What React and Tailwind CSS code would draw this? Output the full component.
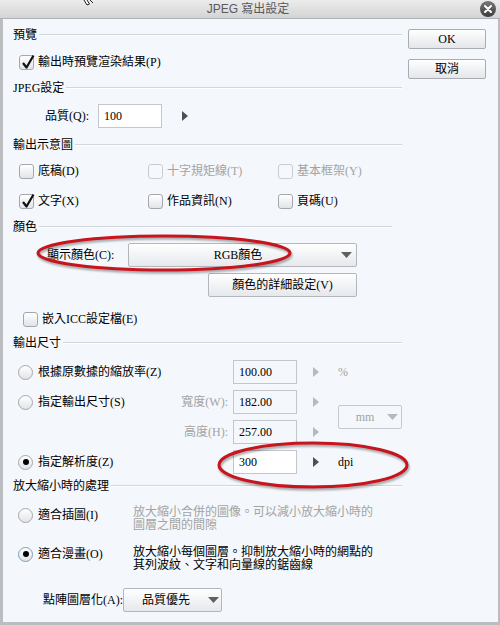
import React from "react";

function Header({ children, extra = "" }) {
  return (
    <div className={`flex h-[14px] items-center pl-[10px] ${extra}`}>
      <span className="whitespace-nowrap leading-[14px]">{children}</span>
      <div className="ml-[2px] h-[2px] flex-1 border-t border-b border-t-[#d3d6db] border-b-white" />
    </div>
  );
}

function Box({ checked, disabled }) {
  return (
    <span
      className={`relative inline-block h-[15px] w-[15px] shrink-0 rounded-[3px] border ${
        disabled
          ? "border-[#c9ccd1] bg-[#f6f8fb]"
          : "border-[#a4a8ae] bg-linear-to-b from-white to-[#e2e4e8]"
      }`}
    >
      {checked && (
        <svg className="absolute left-[1px] top-[-2px]" width="14" height="16" viewBox="0 0 14 16">
          <path d="M2 9 L5.5 13.5 L12.5 1.5" fill="none" stroke="#111" strokeWidth="2.2" strokeLinejoin="round" />
        </svg>
      )}
    </span>
  );
}

function Radio({ checked, focus }) {
  return (
    <span
      className={`flex h-[15px] w-[15px] shrink-0 items-center justify-center rounded-full border bg-linear-to-b from-white to-[#e2e4e8] ${
        focus ? "border-[#7f9db9]" : "border-[#a4a8ae]"
      }`}
    >
      {checked && <span className="h-[6px] w-[6px] rounded-full bg-black" />}
    </span>
  );
}

function Check({ label, checked, disabled }) {
  return (
    <div className="flex h-[16px] items-center gap-[4px]">
      <Box checked={checked} disabled={disabled} />
      <span className={`whitespace-nowrap ${disabled ? "text-[#a3a3a3]" : ""}`}>{label}</span>
    </div>
  );
}

function Field({ value, white }) {
  return (
    <div
      className={`flex h-[24px] w-[64px] shrink-0 items-center border border-[#c3c7cd] pl-[5px] ${
        white ? "bg-white" : "bg-[#f4f7fb]"
      }`}
    >
      {value}
    </div>
  );
}

function Tri({ dark }) {
  return (
    <svg width="6" height="10" viewBox="0 0 6 10" className="shrink-0">
      <path d="M0 0 L6 5 L0 10Z" fill={dark ? "#505050" : "#b6b9bd"} />
    </svg>
  );
}

function Down({ disabled }) {
  return (
    <svg width="11" height="6" viewBox="0 0 11 6" className="shrink-0">
      <path d="M0 0 L11 0 L5.5 6Z" fill={disabled ? "#b6b9bd" : "#606060"} />
    </svg>
  );
}

export default function App() {
  return (
    <div className="relative flex h-[625px] w-[500px] flex-col overflow-hidden bg-[#f4f7fb] font-['Liberation_Serif','Noto_Sans_CJK_TC',serif] text-[12px] text-black">
      <div className="flex h-[19px] shrink-0 items-center border-b border-[#aeb1b5] bg-linear-to-b from-[#ececec] to-[#d4d4d4]">
        <div className="flex-1" />
        <span className="font-['Liberation_Sans','Noto_Sans_CJK_TC',sans-serif] text-[12px] text-[#5a5a5a]">
          JPEG 寫出設定
        </span>
        <div className="flex flex-1 justify-end pr-[4px]">
          <span className="flex h-[16px] w-[16px] items-center justify-center rounded-full bg-linear-to-b from-[#7a7a7a] to-[#3c3c3c]">
            <svg width="8" height="8" viewBox="0 0 8 8">
              <path d="M1 1 L7 7 M7 1 L1 7" stroke="white" strokeWidth="2" strokeLinecap="round" />
            </svg>
          </span>
        </div>
      </div>

      <div className="flex flex-1 border-l-[3px] border-r-[2px] border-b-[3px] border-[#bbbdc0]">
        <div className="flex w-[399px] flex-col">
          <Header extra="mt-[9px]">預覽</Header>
          <div className="mt-[12px] pl-[16px]">
            <Check label="輸出時預覽渲染結果(P)" checked />
          </div>

          <Header extra="mt-[11px]">JPEG設定</Header>
          <div className="mt-[9px] flex h-[24px] items-center pl-[42px]">
            <span className="w-[53px]">品質(Q):</span>
            <Field value="100" white />
            <span className="ml-[20px]">
              <Tri dark />
            </span>
          </div>

          <Header extra="mt-[10px]">輸出示意圖</Header>
          <div className="mt-[11px] grid grid-cols-[129px_130px_auto] gap-y-[14px] pl-[16px]">
            <Check label="底稿(D)" />
            <Check label="十字規矩線(T)" disabled />
            <Check label="基本框架(Y)" disabled />
            <Check label="文字(X)" checked />
            <Check label="作品資訊(N)" />
            <Check label="頁碼(U)" />
          </div>

          <Header extra="mt-[11px] pr-[10px]">顏色</Header>
          <div className="mt-[9px] flex h-[24px] items-center pl-[44px]">
            <span className="w-[81px]">顯示顏色(C):</span>
            <div className="flex h-[24px] w-[229px] items-center rounded-[2px] border border-[#b3b7bd] bg-linear-to-b from-white to-[#e6e8ec] pr-[4px]">
              <span className="flex-1 pl-[6px] text-center">RGB顏色</span>
              <Down />
            </div>
          </div>
          <div className="mt-[6px] pl-[205px]">
            <div className="flex h-[24px] w-[149px] items-center justify-center rounded-[2px] border border-[#b3b7bd] bg-linear-to-b from-white to-[#e6e8ec]">
              顏色的詳細設定(V)
            </div>
          </div>
          <div className="mt-[14px] pl-[20px]">
            <Check label="嵌入ICC設定檔(E)" />
          </div>

          <Header extra="mt-[9px]">輸出尺寸</Header>
          <div className="mt-[10px] flex h-[24px] items-center pl-[15px]">
            <div className="flex w-[215px] items-center gap-[5px]">
              <Radio />
              <span>根據原數據的縮放率(Z)</span>
            </div>
            <Field value="100.00" />
            <span className="ml-[16px]">
              <Tri />
            </span>
            <span className="ml-[19px] text-[#a3a3a3]">%</span>
          </div>
          <div className="mt-[6px] flex items-center pl-[15px]">
            <div className="flex flex-col gap-[6px]">
              <div className="flex h-[24px] items-center">
                <div className="flex w-[215px] items-center justify-between pr-[5px]">
                  <div className="flex items-center gap-[5px]">
                    <Radio />
                    <span>指定輸出尺寸(S)</span>
                  </div>
                  <span className="text-[#a3a3a3]">寬度(W):</span>
                </div>
                <Field value="182.00" />
                <span className="ml-[16px]">
                  <Tri />
                </span>
              </div>
              <div className="flex h-[24px] items-center">
                <div className="flex w-[215px] justify-end pr-[5px]">
                  <span className="text-[#a3a3a3]">高度(H):</span>
                </div>
                <Field value="257.00" />
                <span className="ml-[16px]">
                  <Tri />
                </span>
              </div>
            </div>
            <div className="ml-[19px] flex h-[24px] w-[64px] items-center rounded-[2px] border border-[#c6c9ce] pr-[3px]">
              <span className="flex-1 pl-[4px] text-center text-[#a3a3a3]">mm</span>
              <Down disabled />
            </div>
          </div>
          <div className="mt-[6px] flex h-[24px] items-center pl-[15px]">
            <div className="flex w-[215px] items-center gap-[5px]">
              <Radio checked />
              <span>指定解析度(Z)</span>
            </div>
            <Field value="300" white />
            <span className="ml-[16px]">
              <Tri dark />
            </span>
            <span className="ml-[19px]">dpi</span>
          </div>

          <Header extra="mt-[5px]">放大縮小時的處理</Header>
          <div className="mt-[13px] flex items-start pl-[15px]">
            <div className="flex w-[115px] items-center gap-[5px]">
              <Radio />
              <span>適合插圖(I)</span>
            </div>
            <div className="w-[250px] leading-[13px] text-[#a3a3a3]">
              放大縮小合併的圖像。可以減小放大縮小時的
              <br />
              圖層之間的間隙
            </div>
          </div>
          <div className="mt-[13px] flex items-start pl-[15px]">
            <div className="flex w-[115px] items-center gap-[5px]">
              <Radio checked focus />
              <span>適合漫畫(O)</span>
            </div>
            <div className="w-[250px] pt-[1px] leading-[13px]">
              放大縮小每個圖層。抑制放大縮小時的網點的
              <br />
              其列波紋、文字和向量線的鋸齒線
            </div>
          </div>
          <div className="mt-[16px] flex h-[24px] items-center pl-[40px]">
            <span className="w-[80px]">點陣圖層化(A):</span>
            <div className="flex h-[24px] w-[99px] items-center rounded-[2px] border border-[#b3b7bd] bg-linear-to-b from-white to-[#e6e8ec] pr-[2px]">
              <span className="flex-1 text-center">品質優先</span>
              <Down />
            </div>
          </div>
        </div>

        <div className="ml-[6px] flex w-[78px] flex-col gap-[10px] pt-[10px]">
          <div className="flex h-[20px] items-center justify-center rounded-[2px] border border-[#a9adb3] bg-linear-to-b from-white to-[#e4e6ea]">
            OK
          </div>
          <div className="flex h-[20px] items-center justify-center rounded-[2px] border border-[#a9adb3] bg-linear-to-b from-white to-[#e4e6ea]">
            取消
          </div>
        </div>
      </div>

      <svg className="absolute left-[83px] top-0" width="12" height="6" viewBox="0 0 12 6">
        <path d="M1 0 L4 5 L6.5 4 L4 0" fill="white" stroke="#222" strokeWidth="1" />
        <path d="M7 0 L10 3" stroke="#222" strokeWidth="1" />
      </svg>

      <svg
        className="absolute left-[34px] top-[233px] drop-shadow-[1px_2px_1px_rgba(0,0,0,0.35)]"
        width="260"
        height="40"
        viewBox="0 0 260 40"
      >
        <ellipse cx="130" cy="20" rx="126" ry="17" fill="none" stroke="#c8141c" strokeWidth="3" />
      </svg>
      <svg
        className="absolute left-[216px] top-[440px] drop-shadow-[1px_2px_1px_rgba(0,0,0,0.35)]"
        width="194"
        height="50"
        viewBox="0 0 194 50"
      >
        <ellipse cx="97" cy="25" rx="94" ry="22" fill="none" stroke="#c8141c" strokeWidth="3" />
      </svg>
    </div>
  );
}
